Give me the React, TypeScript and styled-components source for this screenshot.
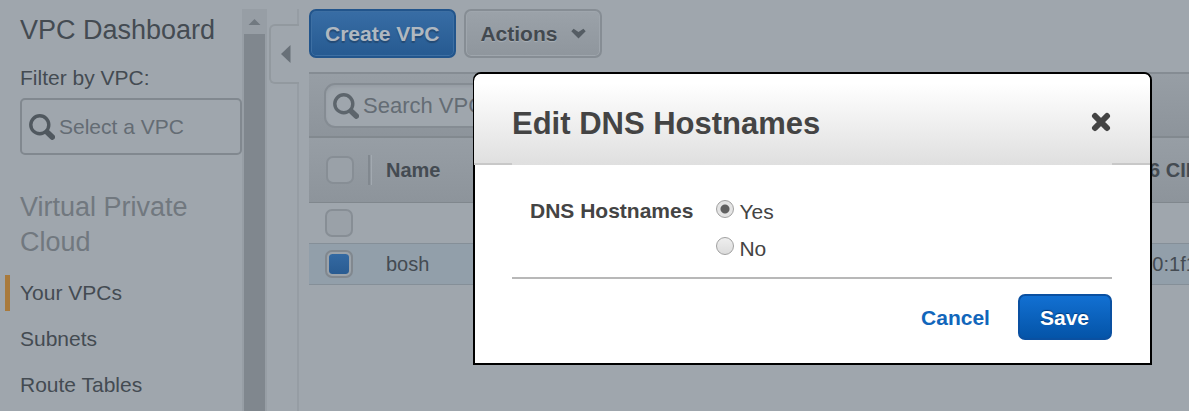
import React from "react";
import styled, { createGlobalStyle, css } from "styled-components";

const GlobalStyle = createGlobalStyle`
  *, *::before, *::after { box-sizing: border-box; }
  html, body, #root { height: 100%; }
  body {
    margin: 0;
    overflow: hidden;
    background: #9fa6ad;
    color: #444b52;
    font: 21px/26px "Liberation Sans", Arial, sans-serif;
  }
  button, input { font: inherit; color: inherit; }
`;

const Page = styled.div`
  display: flex;
  min-height: 100vh;
`;

const Sidebar = styled.aside`
  flex: none;
  width: 242px;
  padding-top: 12px;
`;

const SideTitle = styled.h1`
  margin: 0;
  padding-left: 20px;
  font-size: 27px;
  line-height: 37px;
  font-weight: 400;
`;

const Filter = styled.label`
  display: block;
  padding: 16px 0 0 20px;
`;

const FilterBox = styled.span`
  display: flex;
  align-items: center;
  gap: 4px;
  height: 57px;
  margin-top: 7px;
  padding: 0 7px;
  border: 2px solid #81888f;
  border-radius: 5px;
`;

const FieldInput = styled.input<{ $large?: boolean }>`
  flex: 1;
  min-width: 0;
  padding: 0;
  border: 0;
  outline: 0;
  background: none;
  font-size: ${(p) => (p.$large ? "22px" : "21px")};
  &::placeholder {
    color: #646c74;
    opacity: 1;
  }
`;

const SectionTitle = styled.h2`
  margin: 35px 0 15px;
  padding-left: 20px;
  color: #71787f;
  font-size: 27px;
  line-height: 35px;
  font-weight: 400;
`;

const NavList = styled.nav`
  display: flex;
  flex-direction: column;
  gap: 10px;
  padding-left: 5px;
`;

const NavLink = styled.a<{ $active?: boolean }>`
  padding-left: 10px;
  border-left: 5px solid ${(p) => (p.$active ? "#a97a3c" : "transparent")};
  color: #444b52;
  line-height: 36px;
  text-decoration: none;
`;

const ScrollTrack = styled.div`
  display: flex;
  flex-direction: column;
  flex: none;
  width: 25px;
  margin-top: 9px;
  padding: 0 2px;
  background: #979ea5;
`;

const ScrollArrow = styled.svg`
  display: block;
  width: 21px;
  height: 25px;
`;

const ScrollThumb = styled.div`
  flex: 1;
  background: #80878e;
`;

const Gutter = styled.div`
  display: flex;
  flex-direction: column;
  flex: none;
  width: 32px;
  padding: 9px 0 0 2px;
`;

const GutterLine = styled.div<{ $grow?: boolean }>`
  align-self: flex-end;
  width: 2px;
  background: #969da4;
  ${(p) => (p.$grow ? css`flex: 1;` : css`height: 15px;`)}
`;

const Collapse = styled.button`
  display: flex;
  align-items: center;
  justify-content: center;
  height: 60px;
  padding: 0 0 0 1px;
  border: 2px solid #92999f;
  border-right: 0;
  border-radius: 6px 0 0 6px;
  background: none;
`;

const Main = styled.main`
  flex: 1;
  min-width: 0;
  padding: 9px 0 0 10px;
`;

const ButtonBar = styled.div`
  display: flex;
  gap: 8px;
  margin-bottom: 14px;
`;

const ToolButton = styled.button<{ $primary?: boolean }>`
  display: flex;
  align-items: center;
  gap: 14px;
  height: 49px;
  padding: 0 14px;
  border: 2px solid #868d94;
  border-radius: 7px;
  background: linear-gradient(#9ba2a9, #8f969d);
  box-shadow: inset 0 0 0 1px #9fa6ad;
  color: #42494f;
  font-weight: 700;
  text-shadow: 0 1px 1px #a9b0b7;
  ${(p) =>
    p.$primary &&
    css`
      padding: 0 15px 0 14px;
      border-color: #22558c;
      background: linear-gradient(#386da5, #265a91);
      box-shadow: inset 0 0 0 1px #3d6fa3;
      color: #b0b8c0;
      text-shadow: 0 2px 1px #234a75;
    `}
`;

const SearchBar = styled.div`
  display: flex;
  height: 66px;
  padding: 9px 15px;
  border-top: 2px solid #858c93;
  border-bottom: 2px solid #82898f;
  background: linear-gradient(#979ea5, #8d949b);
`;

const SearchBox = styled.label`
  display: flex;
  align-items: center;
  gap: 4px;
  width: 480px;
  height: 45px;
  padding: 0 7px;
  border: 2px solid #858c93;
  border-radius: 11px;
  box-shadow: inset 0 2px 3px #969da4;
  background: #9fa6ad;
`;

const Table = styled.table`
  width: 100%;
  border-collapse: separate;
  border-spacing: 0;
  table-layout: fixed;
  font-size: 20px;
`;

const HeadCell = styled.th`
  height: 65px;
  padding: 0;
  border-bottom: 1px solid #80878d;
  background: linear-gradient(#979ea5, #8d949b);
  text-align: left;
  white-space: nowrap;
`;

const Cell = styled.td<{ $selected?: boolean }>`
  height: ${(p) => (p.$selected ? "42px" : "40px")};
  padding: 0;
  overflow: hidden;
  white-space: nowrap;
  ${(p) =>
    p.$selected &&
    css`
      border-top: 1px solid #858f98;
      border-bottom: 1px solid #858f98;
      background: #929faa;
    `}
`;

const CheckCell = styled.div<{ $head?: boolean }>`
  display: flex;
  align-items: center;
  justify-content: space-between;
  padding: ${(p) => (p.$head ? "0 0 0 17px" : "0 0 0 16px")};
`;

const Divider = styled.span`
  width: 4px;
  height: 30px;
  border-left: 2px solid #81888f;
  border-right: 1px solid #a2a9b0;
`;

const CheckBox = styled.input`
  appearance: none;
  flex: none;
  width: 28px;
  height: 28px;
  margin: 0;
  border: 2px solid #878e95;
  border-radius: 7px;
  background: #9aa1a8;
  &:checked {
    border-color: #81888f;
    background: linear-gradient(#356ba4, #285a90);
    background-clip: content-box;
    padding: 2px;
    box-shadow: inset 0 0 0 2px #9ca3aa;
  }
`;

const ModalLayer = styled.div`
  position: fixed;
  inset: 0;
  display: flex;
  align-items: flex-start;
  justify-content: flex-end;
  padding: 72px 37px 0;
`;

const Dialog = styled.section`
  width: 679px;
  border: 2px solid #000;
  border-radius: 8px 8px 0 0;
  background: #fff;
  color: #444;
`;

const DialogHead = styled.header`
  display: flex;
  align-items: center;
  justify-content: space-between;
  height: 91px;
  margin-left: -1px;
  padding: 5px 39px 0 38px;
  border-radius: 7px 6px 0 0;
  background:
    linear-gradient(#c8c8c8, #c8c8c8) left bottom / 38px 2px no-repeat,
    linear-gradient(#c8c8c8, #c8c8c8) right bottom / 38px 2px no-repeat,
    linear-gradient(#fff 10%, #dfdfdf);
`;

const DialogTitle = styled.h2`
  margin: 0;
  padding-top: 4px;
  font-size: 31px;
  line-height: 40px;
`;

const CloseButton = styled.button`
  display: flex;
  padding: 0;
  border: 0;
  background: none;
`;

const DialogBody = styled.div`
  padding: 32px 38px 23px 37px;
`;

const FieldSet = styled.div`
  display: flex;
  align-items: flex-start;
  gap: 23px;
  padding: 0 0 14px 18px;
  border-bottom: 2px solid #b8b8b8;
`;

const FieldName = styled.span`
  line-height: 28px;
  font-weight: 700;
`;

const Options = styled.div`
  display: flex;
  flex-direction: column;
  gap: 8px;
`;

const Option = styled.label`
  display: flex;
  align-items: flex-start;
  gap: 5px;
  line-height: 29px;
`;

const Radio = styled.input`
  appearance: none;
  width: 18px;
  height: 18px;
  margin: 3px 0 0;
  border: 1px solid #a0a0a0;
  border-radius: 50%;
  background: linear-gradient(#eee, #dcdcdc);
  &:checked {
    background: radial-gradient(circle, #606060 4px, #e4e4e4 5px);
  }
`;

const DialogActions = styled.footer`
  display: flex;
  align-items: center;
  justify-content: flex-end;
  gap: 28px;
  padding-top: 15px;
`;

const CancelLink = styled.a`
  padding-top: 2px;
  color: #1166bb;
  font-weight: 700;
  text-decoration: none;
`;

const SaveButton = styled.button`
  height: 46px;
  padding: 2px 21px 0 20px;
  border: 2px solid #0a50a1;
  border-radius: 7px;
  background: linear-gradient(#1270d2, #0454a8);
  color: #fff;
  font-weight: 700;
  text-shadow: 0 -1px 1px #003a7a;
`;

const SearchIcon = ({ color }: { color: string }) => (
  <svg width="26" height="26" viewBox="0 0 26 26" fill="none" stroke={color} aria-hidden="true">
    <circle cx="10.8" cy="10.8" r="9" strokeWidth="3.4" />
    <path d="M16.2 16.4L18.5 18.6" strokeWidth="4" />
    <path d="M18.5 18.6L23.2 23.1" strokeWidth="5.6" strokeLinecap="round" />
  </svg>
);

export default function App() {
  return (
    <>
      <GlobalStyle />
      <Page>
        <Sidebar>
          <SideTitle>VPC Dashboard</SideTitle>
          <Filter>
            Filter by VPC:
            <FilterBox>
              <SearchIcon color="#50585f" />
              <FieldInput placeholder="Select a VPC" />
            </FilterBox>
          </Filter>
          <SectionTitle>Virtual Private Cloud</SectionTitle>
          <NavList>
            <NavLink href="#vpcs" $active>Your VPCs</NavLink>
            <NavLink href="#subnets">Subnets</NavLink>
            <NavLink href="#routes">Route Tables</NavLink>
          </NavList>
        </Sidebar>
        <ScrollTrack>
          <ScrollArrow viewBox="0 0 21 25" aria-hidden="true">
            <path d="M4.5 16L10.5 10L16.5 16Z" fill="#717980" />
          </ScrollArrow>
          <ScrollThumb />
        </ScrollTrack>
        <Gutter>
          <GutterLine />
          <Collapse aria-label="Collapse sidebar">
            <svg width="10" height="18" viewBox="0 0 10 18" aria-hidden="true">
              <path d="M0 9L9.5 0V18Z" fill="#687078" />
            </svg>
          </Collapse>
          <GutterLine $grow />
        </Gutter>
        <Main>
          <ButtonBar>
            <ToolButton $primary>Create VPC</ToolButton>
            <ToolButton>
              Actions
              <svg width="15" height="11" viewBox="0 0 15 11" aria-hidden="true">
                <path d="M0.3 3.2L2.6 0.8L7.5 4L12.4 0.8L14.7 3.2L7.5 10.6Z" fill="#555d64" />
              </svg>
            </ToolButton>
          </ButtonBar>
          <SearchBar>
            <SearchBox>
              <SearchIcon color="#5d656c" />
              <FieldInput $large placeholder="Search VPCs" />
            </SearchBox>
          </SearchBar>
          <Table>
            <colgroup>
              <col style={{ width: 77 }} />
              <col />
              <col style={{ width: 70 }} />
            </colgroup>
            <thead>
              <tr>
                <HeadCell>
                  <CheckCell $head>
                    <CheckBox type="checkbox" aria-label="Select all" />
                    <Divider />
                    <span />
                  </CheckCell>
                </HeadCell>
                <HeadCell>Name</HeadCell>
                <HeadCell>IPv6 CIDR</HeadCell>
              </tr>
            </thead>
            <tbody>
              <tr>
                <Cell>
                  <CheckCell><CheckBox type="checkbox" aria-label="Select VPC" /></CheckCell>
                </Cell>
                <Cell />
                <Cell />
              </tr>
              <tr>
                <Cell $selected>
                  <CheckCell><CheckBox type="checkbox" aria-label="Select bosh" defaultChecked /></CheckCell>
                </Cell>
                <Cell $selected>bosh</Cell>
                <Cell $selected>2600:1f1</Cell>
              </tr>
            </tbody>
          </Table>
        </Main>
      </Page>
      <ModalLayer>
        <Dialog role="dialog" aria-modal="true" aria-labelledby="dialog-title">
          <DialogHead>
            <DialogTitle id="dialog-title">Edit DNS Hostnames</DialogTitle>
            <CloseButton aria-label="Close">
              <svg width="20" height="20" viewBox="0 0 20 20" stroke="#444" strokeWidth="6" strokeLinecap="round" aria-hidden="true">
                <path d="M4 4L16 16M16 4L4 16" />
              </svg>
            </CloseButton>
          </DialogHead>
          <DialogBody>
            <FieldSet role="radiogroup" aria-labelledby="dns-label">
              <FieldName id="dns-label">DNS Hostnames</FieldName>
              <Options>
                <Option>
                  <Radio type="radio" name="dns" defaultChecked />
                  Yes
                </Option>
                <Option>
                  <Radio type="radio" name="dns" />
                  No
                </Option>
              </Options>
            </FieldSet>
            <DialogActions>
              <CancelLink href="#cancel">Cancel</CancelLink>
              <SaveButton>Save</SaveButton>
            </DialogActions>
          </DialogBody>
        </Dialog>
      </ModalLayer>
    </>
  );
}
